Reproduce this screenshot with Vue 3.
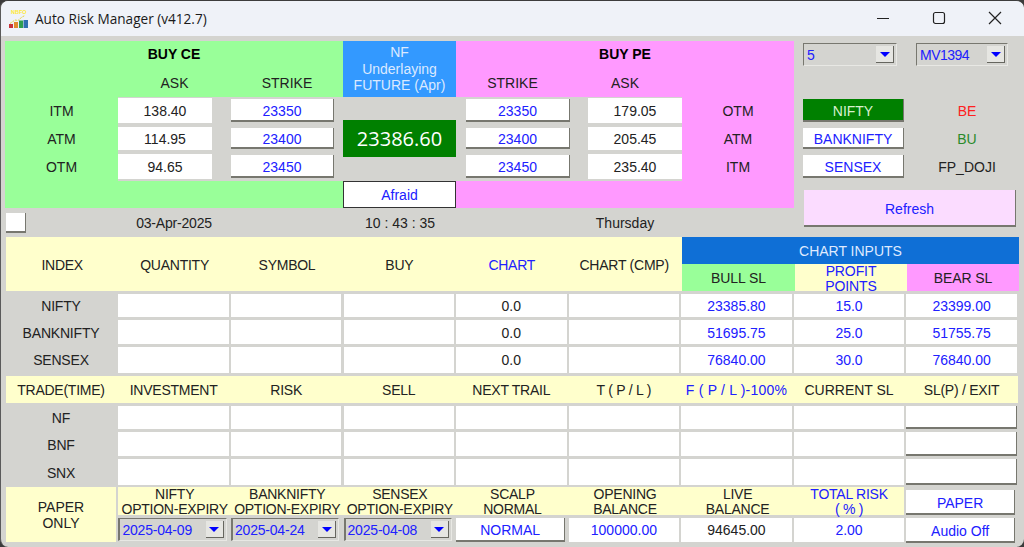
<script setup>
const ceRows = [
  { label: "ITM", ask: "138.40", strike: "23350" },
  { label: "ATM", ask: "114.95", strike: "23400" },
  { label: "OTM", ask: "94.65", strike: "23450" },
];
const peRows = [
  { label: "OTM", ask: "179.05", strike: "23350" },
  { label: "ATM", ask: "205.45", strike: "23400" },
  { label: "ITM", ask: "235.40", strike: "23450" },
];
const indexRows = [
  { name: "NIFTY", tag: "BE", tagClass: "red", active: true },
  { name: "BANKNIFTY", tag: "BU", tagClass: "grn", active: false },
  { name: "SENSEX", tag: "FP_DOJI", tagClass: "", active: false },
];
const chartHead = ["INDEX", "QUANTITY", "SYMBOL", "BUY", "CHART", "CHART (CMP)"];
const chartRows = [
  { name: "NIFTY", bull: "23385.80", pts: "15.0", bear: "23399.00" },
  { name: "BANKNIFTY", bull: "51695.75", pts: "25.0", bear: "51755.75" },
  { name: "SENSEX", bull: "76840.00", pts: "30.0", bear: "76840.00" },
];
const tradeHead = ["TRADE(TIME)", "INVESTMENT", "RISK", "SELL", "NEXT TRAIL", "T ( P / L )", "F ( P / L )-100%", "CURRENT SL", "SL(P) / EXIT"];
const trades = ["NF", "BNF", "SNX"];
const expiries = [
  { name: "NIFTY", date: "2025-04-09" },
  { name: "BANKNIFTY", date: "2025-04-24" },
  { name: "SENSEX", date: "2025-04-08" },
];
</script>

<template>
  <div class="window">
    <header class="titlebar">
      <svg class="appicon" width="22" height="22" viewBox="0 0 22 22">
        <text x="3" y="6.5" font-size="5.5" font-weight="700" fill="#ffe93a" font-family="Liberation Sans">NBFO</text>
        <path d="M2 16.5L7 13L10 13.5L14 10L17 8.5" fill="none" stroke="#e6d43c" stroke-width="1" stroke-dasharray="2 1" />
        <rect x="1" y="17" width="4" height="4" fill="#c8323a" />
        <rect x="6" y="15" width="4" height="6" fill="#e08a2c" />
        <rect x="11" y="13.5" width="4" height="7.5" fill="#2f9e4f" />
        <rect x="15.5" y="13" width="4.5" height="8" fill="#2f6fb0" />
      </svg>
      <span class="apptitle">Auto Risk Manager (v412.7)</span>
      <div class="winctl">
        <svg width="14" height="14" viewBox="0 0 14 14"><path d="M1 7.5H13" stroke="#222" stroke-width="1.2" /></svg>
        <svg width="14" height="14" viewBox="0 0 14 14"><rect x="1.5" y="1.5" width="11" height="11" rx="2" fill="none" stroke="#222" stroke-width="1.2" /></svg>
        <svg width="14" height="14" viewBox="0 0 14 14"><path d="M1 1L13 13M13 1L1 13" stroke="#222" stroke-width="1.2" /></svg>
      </div>
    </header>

    <main class="content">
      <section class="top">
        <div class="panel ce">
          <div class="ptitle">BUY CE</div>
          <div class="phead ce-head"><span>ASK</span><span>STRIKE</span></div>
          <div class="prow-wrap">
            <div class="plabels">
              <span v-for="r in ceRows" :key="r.label" class="plabel">{{ r.label }}</span>
            </div>
            <div class="band ce-band">
              <template v-for="r in ceRows" :key="r.label">
                <div class="ask">{{ r.ask }}</div>
                <div class="strike"><button class="btn">{{ r.strike }}</button></div>
              </template>
            </div>
          </div>
        </div>

        <div class="mid">
          <div class="under">NF<br />Underlaying<br />FUTURE (Apr)</div>
          <div class="ltp-wrap"><div class="ltp">23386.60</div></div>
          <div class="afraid">Afraid</div>
        </div>

        <div class="panel pe">
          <div class="ptitle">BUY PE</div>
          <div class="phead pe-head"><span>STRIKE</span><span>ASK</span></div>
          <div class="prow-wrap pe-wrap">
            <div class="band pe-band">
              <template v-for="r in peRows" :key="r.label">
                <div class="strike"><button class="btn">{{ r.strike }}</button></div>
                <div class="ask">{{ r.ask }}</div>
              </template>
            </div>
            <div class="plabels">
              <span v-for="r in peRows" :key="r.label" class="plabel">{{ r.label }}</span>
            </div>
          </div>
        </div>

        <aside class="side">
          <div class="selects">
            <div class="combo c1"><span>5</span><i class="drop"></i></div>
            <div class="combo c2"><span>MV1394</span><i class="drop"></i></div>
          </div>
          <div class="idx">
            <div v-for="r in indexRows" :key="r.name" class="idxrow">
              <div class="idxcell"><button class="btn idxbtn" :class="{ on: r.active }">{{ r.name }}</button></div>
              <span class="tag" :class="r.tagClass">{{ r.tag }}</span>
            </div>
          </div>
        </aside>
      </section>

      <section class="status">
        <div class="statusleft">
          <button class="btn check"></button>
          <span class="date">03-Apr-2025</span>
          <span class="time">10 : 43 : 35</span>
          <span class="day">Thursday</span>
        </div>
        <button class="btn refresh">Refresh</button>
      </section>

      <section class="chart-head">
        <div class="yhead tall">
          <span v-for="h in chartHead" :key="h" :class="{ blue: h === 'CHART' }">{{ h }}</span>
        </div>
        <div class="inputs">
          <div class="inputs-title">CHART INPUTS</div>
          <div class="inputs-sub">
            <span class="s-green">BULL SL</span>
            <span class="s-yellow blue">PROFIT<br />POINTS</span>
            <span class="s-pink">BEAR SL</span>
          </div>
        </div>
      </section>

      <section class="rows chart-rows">
        <div v-for="r in chartRows" :key="r.name" class="grid9">
          <div class="rowname">{{ r.name }}</div>
          <div class="cell"></div>
          <div class="cell"></div>
          <div class="cell"></div>
          <div class="cell">0.0</div>
          <div class="cell"></div>
          <div class="cell blue">{{ r.bull }}</div>
          <div class="cell blue">{{ r.pts }}</div>
          <div class="cell blue">{{ r.bear }}</div>
        </div>
      </section>

      <section class="trade-head grid9">
        <span v-for="h in tradeHead" :key="h" :class="{ blue: h.startsWith('F (') }">{{ h }}</span>
      </section>

      <section class="rows trade-rows">
        <div v-for="t in trades" :key="t" class="grid9">
          <div class="rowname">{{ t }}</div>
          <div v-for="n in 7" :key="n" class="cell"></div>
          <div class="exit"><button class="btn"></button></div>
        </div>
      </section>

      <section class="bottom grid9">
        <div class="paper">PAPER<br />ONLY</div>
        <div v-for="e in expiries" :key="e.name" class="expiry">
          <div class="elabel">{{ e.name }}<br />OPTION-EXPIRY</div>
          <div class="combo ecombo"><span>{{ e.date }}</span><i class="drop"></i></div>
        </div>
        <div class="expiry">
          <div class="elabel">SCALP<br />NORMAL</div>
          <button class="btn ebtn">NORMAL</button>
        </div>
        <div class="expiry">
          <div class="elabel">OPENING<br />BALANCE</div>
          <div class="cell evalue blue">100000.00</div>
        </div>
        <div class="expiry">
          <div class="elabel">LIVE<br />BALANCE</div>
          <div class="cell evalue">94645.00</div>
        </div>
        <div class="expiry last">
          <div class="elabel blue">TOTAL RISK<br />( % )</div>
          <div class="cell evalue blue">2.00</div>
        </div>
        <div class="expiry tailbtns">
          <button class="btn">PAPER</button>
          <button class="btn">Audio Off</button>
        </div>
      </section>
    </main>
  </div>
</template>

<style>
html,
body {
  margin: 0;
  background: #3b3b3b;
}
</style>

<style scoped>
* {
  box-sizing: border-box;
}
.window {
  width: 1024px;
  height: 547px;
  overflow: hidden;
  border-top: 1px solid #3d3d3d;
  border-left: 1px solid #5a5a5a;
  border-radius: 8px;
  background: #d4d4d0;
  font-family: "Liberation Sans", Arial, sans-serif;
  font-size: 14px;
  color: #222;
}
.titlebar {
  height: 35px;
  background: #eff2f8;
  display: flex;
  align-items: center;
  padding-left: 7px;
}
.appicon {
  flex: none;
  margin-top: -2px;
}
.apptitle {
  margin-left: 5px;
  font-family: "Open Sans", sans-serif;
  font-size: 13.6px;
  color: #1a1a1a;
}
.winctl {
  margin-left: auto;
  display: flex;
  gap: 42px;
  padding-right: 22px;
  margin-top: -1px;
}
.content {
  padding-left: 4px;
}
.blue {
  color: #2020ff;
}
.btn {
  font: inherit;
  color: #2020ff;
  background: #fff;
  border: none;
  border-right: 1px solid #77776f;
  border-bottom: 2px solid #77776f;
  padding: 2px 0 0;
  display: block;
  width: 100%;
  height: 100%;
}
.top {
  display: flex;
  margin-top: 5px;
  height: 167px;
}
.panel {
  width: 338px;
  flex: none;
}
.ce {
  background: #99ff99;
}
.pe {
  background: #ff99ff;
}
.ptitle {
  height: 27px;
  line-height: 27px;
  text-align: center;
  font-weight: 700;
  color: #000;
}
.phead {
  height: 29px;
  display: grid;
  align-items: center;
  text-align: center;
}
.ce-head {
  grid-template-columns: 113px 113px 112px;
}
.ce-head span:first-child {
  grid-column: 2;
}
.pe-head {
  grid-template-columns: 113px 112px;
}
.prow-wrap {
  display: grid;
  grid-template-columns: 113px 225px;
  height: 84px;
}
.pe-wrap {
  grid-template-columns: 226px 112px;
}
.plabels {
  display: grid;
  grid-template-rows: 28px 27px 29px;
  text-align: center;
}
.plabel {
  align-self: center;
}
.band {
  display: grid;
  grid-template-rows: 28px 27px 29px;
  background: #d4d4d0;
}
.ce-band {
  grid-template-columns: 113px 112px;
}
.pe-band {
  grid-template-columns: 132px 94px;
}
.ask {
  background: #fff;
  display: flex;
  align-items: center;
  justify-content: center;
  margin: 2px 0;
}
.ce-band .ask {
  margin-right: 19px;
}
.band .ask:nth-child(-n + 2) {
  margin-top: 1px;
}
.strike {
  padding: 3px 0;
}
.band .strike:nth-child(-n + 2) {
  padding-top: 2px;
}
.ce-band .strike {
  padding-right: 9px;
}
.pe-band .strike {
  padding-left: 10px;
  padding-right: 18px;
}
.mid {
  width: 113px;
  flex: none;
  display: flex;
  flex-direction: column;
}
.under {
  height: 56px;
  background: #3399ff;
  color: #dbe9ff;
  text-align: center;
  line-height: 16.5px;
  padding-top: 3px;
}
.ltp-wrap {
  flex: 1;
  display: flex;
  align-items: center;
  padding-bottom: 1px;
}
.ltp {
  width: 100%;
  height: 37px;
  background: #008000;
  color: #fff;
  font-family: "Open Sans", sans-serif;
  font-size: 20px;
  display: flex;
  align-items: center;
  justify-content: center;
}
.afraid {
  height: 27px;
  background: #fff;
  border: 1px solid #333;
  color: #2020ff;
  display: flex;
  align-items: center;
  justify-content: center;
}
.side {
  flex: 1;
  padding-left: 9px;
}
.selects {
  display: flex;
  gap: 19px;
  padding-top: 2px;
}
.combo {
  height: 23px;
  border: 1px solid;
  border-color: #77776f #e8e8e4 #e8e8e4 #77776f;
  display: flex;
  align-items: center;
  justify-content: space-between;
  color: #2020ff;
  padding-left: 3px;
  padding-right: 2px;
}
.c1 {
  width: 94px;
}
.c2 {
  width: 92px;
  letter-spacing: -0.5px;
}
.drop {
  width: 18px;
  height: 17px;
  flex: none;
  background: #e6e6e2;
  border-right: 1px solid #66665f;
  border-bottom: 1px solid #66665f;
  display: flex;
  align-items: center;
  justify-content: center;
}
.drop::after {
  content: "";
  border-left: 5px solid transparent;
  border-right: 5px solid transparent;
  border-top: 5px solid #0000ff;
}
.idx {
  margin-top: 31px;
}
.idxrow {
  display: grid;
  grid-template-columns: 101px 126px;
  align-items: center;
}
.idxrow:nth-child(1) {
  height: 28px;
}
.idxrow:nth-child(2) {
  height: 27px;
}
.idxrow:nth-child(3) {
  height: 29px;
}
.idxcell {
  height: 100%;
  padding: 3px 0;
}
.idxrow:nth-child(1) .idxcell {
  padding-top: 2px;
}
.idxbtn.on {
  background: #008000;
  color: #d8f0d0;
}
.tag {
  text-align: center;
}
.tag.red {
  color: #ff2020;
}
.tag.grn {
  color: #2a8a2a;
}
.status {
  display: flex;
  justify-content: space-between;
  height: 29px;
}
.statusleft {
  display: grid;
  grid-template-columns: 20px 298px 154px 296px;
  align-items: center;
  text-align: center;
  align-self: flex-start;
  width: 768px;
  height: 29px;
}
.date {
  letter-spacing: -0.2px;
}
.check {
  height: 20px;
  margin-left: 1px;
  width: 20px;
}
.refresh {
  background: #fbdcff;
  width: 212px;
  height: 37px;
  margin-right: 8px;
  margin-top: -18px;
}
.chart-head {
  display: flex;
  height: 54px;
  padding-left: 1px;
}
.yhead {
  width: 676px;
  background: #ffffcc;
  display: grid;
  grid-template-columns: repeat(6, 112.4px);
  align-items: center;
  text-align: center;
  letter-spacing: -0.25px;
  padding-top: 1px;
}
.inputs {
  width: 337px;
  display: grid;
  grid-template-rows: 27px 27px;
}
.inputs-title {
  background: #0f6fd6;
  color: #dfeaff;
  display: flex;
  align-items: center;
  justify-content: center;
}
.inputs-sub {
  display: grid;
  grid-template-columns: 113px 112px 112px;
  grid-template-rows: 27px;
  text-align: center;
  letter-spacing: -0.1px;
}
.inputs-sub span {
  display: flex;
  align-items: center;
  justify-content: center;
  line-height: 15px;
  padding-top: 1px;
}
.inputs-sub .s-yellow {
  padding-top: 2px;
}
.s-green {
  background: #99ff99;
}
.s-yellow {
  background: #ffffcc;
}
.s-pink {
  background: #ff99ff;
}
.grid9 {
  display: grid;
  grid-template-columns: repeat(9, 110.4px);
  column-gap: 2.2px;
  margin-left: 0.8px;
}
.rows {
  padding-top: 3px;
}
.chart-rows .grid9 {
  margin-bottom: 3px;
}
.chart-rows .grid9:nth-child(1) {
  height: 23px;
}
.chart-rows .grid9:nth-child(2) {
  height: 24px;
}
.chart-rows .grid9:nth-child(3) {
  height: 26px;
}
.trade-rows .grid9:nth-child(1) {
  height: 23px;
  margin-bottom: 3px;
}
.trade-rows .grid9:nth-child(2) {
  height: 24px;
  margin-bottom: 3px;
}
.trade-rows .grid9:nth-child(3) {
  height: 26px;
}
.rows .grid9:nth-child(2) .cell,
.rows .grid9:nth-child(2) .rowname,
.trade-rows .grid9:nth-child(3) .rowname {
  padding-top: 1px;
}
.rowname {
  display: flex;
  align-items: center;
  justify-content: center;
  letter-spacing: -0.2px;
}
.cell {
  background: #fff;
  display: flex;
  align-items: center;
  justify-content: center;
}
.trade-head {
  height: 27px;
  width: 1012px;
  background: #ffffcc;
  align-items: center;
  text-align: center;
  letter-spacing: -0.25px;
}
.trade-head span:nth-child(7) {
  letter-spacing: 0.2px;
}
.trade-head span:nth-child(8) {
  letter-spacing: 0;
}
.bottom {
  margin-top: 2px;
  height: 56px;
}
.paper {
  background: #ffffcc;
  height: 55px;
  display: flex;
  align-items: center;
  justify-content: center;
  text-align: center;
  line-height: 16px;
}
.expiry {
  display: flex;
  flex-direction: column;
}
.elabel {
  height: 28px;
  background: #ffffcc;
  text-align: center;
  line-height: 15px;
  margin-right: -2.2px;
  white-space: nowrap;
  letter-spacing: -0.25px;
}
.last .elabel {
  margin-right: 0;
}
.ecombo {
  height: 23px;
  margin-top: 3px;
  letter-spacing: -0.2px;
  border-left-width: 2px;
  padding-left: 2px;
  margin-right: 2px;
}
.ebtn {
  height: 24px;
  margin-top: 3px;
  width: 109px;
}
.evalue {
  height: 24px;
  margin-top: 3px;
}
.tailbtns {
  padding-top: 3px;
  gap: 3px;
  padding-right: 2px;
}
.tailbtns .btn {
  height: 25px;
}
</style>
